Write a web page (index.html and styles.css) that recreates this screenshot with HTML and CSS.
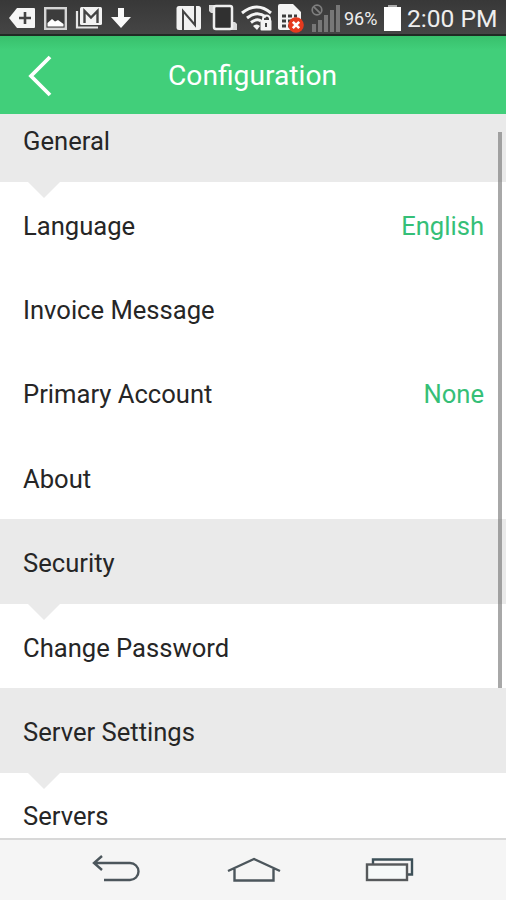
FILE: index.html
```html
<!DOCTYPE html>
<html lang="en">
<head>
    <meta charset="UTF-8">
    <meta name="viewport" content="width=device-width, initial-scale=1.0">
    <title>Configuration</title>
    <link rel="stylesheet" href="styles.css">
</head>
<body>
    <div class="screen">
        <!-- Status bar -->
        <div class="status-bar">
            <div class="status-icons">
                <svg width="28" height="24" viewBox="0 0 28 24">
                    <path d="M0 12 8 2H25a1 1 0 0 1 1 1V21a1 1 0 0 1-1 1H8z" fill="#f5f5f5"/>
                    <path d="M16 6V18M10 12H22" stroke="#444" stroke-width="2.6"/>
                </svg>
                <svg width="24" height="24" viewBox="0 0 24 24">
                    <rect x="1.2" y="2.2" width="20.6" height="20.6" fill="#3c3c3c" stroke="#d5d5d5" stroke-width="2.4"/>
                    <path d="M3.5 20.5V17L8 13 11 15.5 14 14 19.5 18V20.5z" fill="#fff"/>
                </svg>
                <svg width="28" height="24" viewBox="0 0 28 24">
                    <path d="M2 5V21.5H23" fill="none" stroke="#e5e5e5" stroke-width="2.2"/>
                    <rect x="5" y="1" width="22" height="18" rx="1.5" fill="#f2f2f2"/>
                    <path d="M9.5 17V5L16 11.5 22.5 5V17" fill="none" stroke="#444" stroke-width="2.4"/>
                </svg>
                <svg width="22" height="24" viewBox="0 0 22 24">
                    <path d="M8 2H14V11H21L11 22 1 11H8z" fill="#fafafa"/>
                </svg>
            </div>
            <div class="status-icons status-right">
                <svg class="nfc" width="26" height="26" viewBox="0 0 26 26">
                    <rect x="0.5" y="1" width="24.5" height="24" rx="2.5" fill="#f2f2f2"/>
                    <path d="M7 25V6L19 20V1" fill="none" stroke="#444" stroke-width="2"/>
                </svg>
                <svg class="phone" width="30" height="28" viewBox="0 0 30 28">
                    <path d="M1 1H8V9H3L1 7zM22 18H27L29 20V26H22z" fill="#d8d8d8"/>
                    <rect x="6" y="2" width="18" height="23" rx="2" fill="#303030" stroke="#eee" stroke-width="2.5"/>
                </svg>
                <svg width="32" height="28" viewBox="0 0 32 28">
                    <g fill="none" stroke="#f4f4f4" stroke-width="3">
                        <path d="M1 9Q16-3 30 9"/>
                        <path d="M6 14Q16 6 25 13"/>
                        <path d="M10 18.5Q16 14 20 17"/>
                    </g>
                    <path d="M12 22Q16 19 19 22L16 26z" fill="#f4f4f4"/>
                    <path d="M22 17V15A3.5 3.5 0 0 1 29 15V17" fill="none" stroke="#f4f4f4" stroke-width="2"/>
                    <rect x="19.5" y="16" width="11" height="10.5" rx="1" fill="#f4f4f4"/>
                    <path d="M25 19V23" stroke="#444" stroke-width="2"/>
                </svg>
                <svg width="30" height="30" viewBox="0 0 30 30">
                    <path d="M3 1H16L24 9V25A2 2 0 0 1 22 27H3A2 2 0 0 1 1 25V3A2 2 0 0 1 3 1z" fill="#f4f4f4"/>
                    <path d="M5 13H9M11 13H15M17 13H20M5 18H9M11 18H15M5 23H9M11 23H13" stroke="#3e3e3e" stroke-width="3"/>
                    <circle cx="19" cy="22" r="7.8" fill="#e53a1e"/>
                    <path d="M15.8 18.8 22.2 25.2M22.2 18.8 15.8 25.2" stroke="#fff" stroke-width="2.6"/>
                </svg>
                <svg class="signal" width="32" height="28" viewBox="0 0 32 28">
                    <path d="M3 28V20M9 28V16M15 28V11M21 28V6M27 28V1" stroke="#777" stroke-width="4"/>
                    <g fill="none" stroke="#7e7e7e" stroke-width="1.7">
                        <circle cx="6" cy="6" r="4.8"/>
                        <path d="M2.6 2.6 9.4 9.4"/>
                    </g>
                </svg>
                <span class="battery-level">96%</span>
                <svg class="battery" width="17" height="26" viewBox="0 0 17 26">
                    <path d="M4 0H13V2H17V26H0V2H4z" fill="#fff"/>
                    <path d="M4 0H13V2H4z" fill="#aaa"/>
                </svg>
                <span class="clock">2:00 PM</span>
            </div>
        </div>

        <!-- Title bar -->
        <div class="header">
            <svg class="back" width="24" height="42" viewBox="0 0 24 42">
                <path d="M22 2 3 21 22 40" fill="none" stroke="#fff" stroke-width="3.8"/>
            </svg>
            <span class="title">Configuration</span>
        </div>

        <!-- Settings -->
        <div class="content">
            <div class="settings-list">
                <div class="row section"><span>General</span></div>
                <div class="row"><span>Language</span><span class="value">English</span></div>
                <div class="row"><span>Invoice Message</span></div>
                <div class="row"><span>Primary Account</span><span class="value">None</span></div>
                <div class="row"><span>About</span></div>
                <div class="row section"><span>Security</span></div>
                <div class="row"><span>Change Password</span></div>
                <div class="row section"><span>Server Settings</span></div>
                <div class="row"><span>Servers</span></div>
            </div>
            <div class="scrollbar"></div>
        </div>

        <!-- Navigation bar -->
        <div class="nav-bar">
            <svg width="50" height="30" viewBox="0 0 50 30">
                <path d="M10 1 2 8 10 15M2 8H38A8.5 8.5 0 0 1 38 25H12" fill="none" stroke="#4c565c" stroke-width="2.4"/>
            </svg>
            <svg width="54" height="30" viewBox="0 0 54 30">
                <path d="M1 16 27 4 53 16M7.5 14V25.5H46.5V14" fill="none" stroke="#4c565c" stroke-width="2.4"/>
            </svg>
            <svg width="50" height="30" viewBox="0 0 50 30">
                <path d="M8 9V4.5H47V19.5H42" fill="none" stroke="#3d5058" stroke-width="2.4"/>
                <rect x="2" y="9.5" width="40" height="15.5" fill="#f5f9f9" stroke="#56595b" stroke-width="2.4"/>
            </svg>
        </div>
    </div>
</body>
</html>
```
FILE: styles.css
```css
/* General Styling */
* {
    box-sizing: border-box;
}

body {
    margin: 0;
    font-family: Roboto, "Liberation Sans", sans-serif;
    background: #fff;
    color: #262626;
}

svg {
    display: block;
    flex: none;
}

.screen {
    display: flex;
    flex-direction: column;
    width: 506px;
    height: 900px;
    overflow: hidden;
}

/* Status Bar */
.status-bar {
    display: flex;
    justify-content: space-between;
    flex: none;
    height: 36px;
    padding: 2px 9px 0 9px;
    background: linear-gradient(#383838, #454545);
    border-bottom: 2px solid #202a24;
    color: #eee;
}

.status-icons {
    display: flex;
    align-items: center;
    gap: 7px;
}

.status-right {
    gap: 4px;
}

.nfc {
    margin-right: 2px;
}

.phone {
    margin-right: -1px;
}

.signal {
    margin-right: -3px;
}

.battery-level {
    padding-top: 1px;
    font-size: 18px;
    width: 36px;
}

.battery {
    margin-right: 2px;
}

.clock {
    padding-top: 1px;
    font-size: 24.6px;
    width: 90px;
    white-space: nowrap;
}

/* Header */
.header {
    display: flex;
    align-items: center;
    flex: none;
    height: 78px;
    padding: 1px 0 0 28px;
    background: linear-gradient(#38c06c, #41cf7a 14px);
    color: #fff;
}

.title {
    margin-left: 116px;
    font-size: 28.2px;
}

/* Settings List */
.content {
    position: relative;
    flex: 1;
    overflow: hidden;
}

.settings-list {
    margin-top: -16.5px;
}

.row {
    display: flex;
    align-items: center;
    justify-content: space-between;
    position: relative;
    height: 84.4px;
    padding: 3px 22px 0 23px;
    font-size: 25.6px;
}

.section {
    background: #eaeaea;
}

/* Pointer under a section title */
.section::after {
    content: "";
    position: absolute;
    top: 100%;
    left: 28px;
    border: 16px solid transparent;
    border-top-color: #eaeaea;
    border-bottom: 0;
    z-index: 1;
}

.value {
    color: #35bf77;
}

.scrollbar {
    position: absolute;
    top: 18px;
    right: 4px;
    width: 4px;
    height: 556px;
    background: rgba(110, 110, 110, 0.6);
}

/* Navigation Bar */
.nav-bar {
    display: flex;
    justify-content: space-between;
    align-items: center;
    flex: none;
    height: 62px;
    padding: 0 91px 0 92px;
    background: #f5f5f5;
    border-top: 2px solid #d8d8d8;
}
```
